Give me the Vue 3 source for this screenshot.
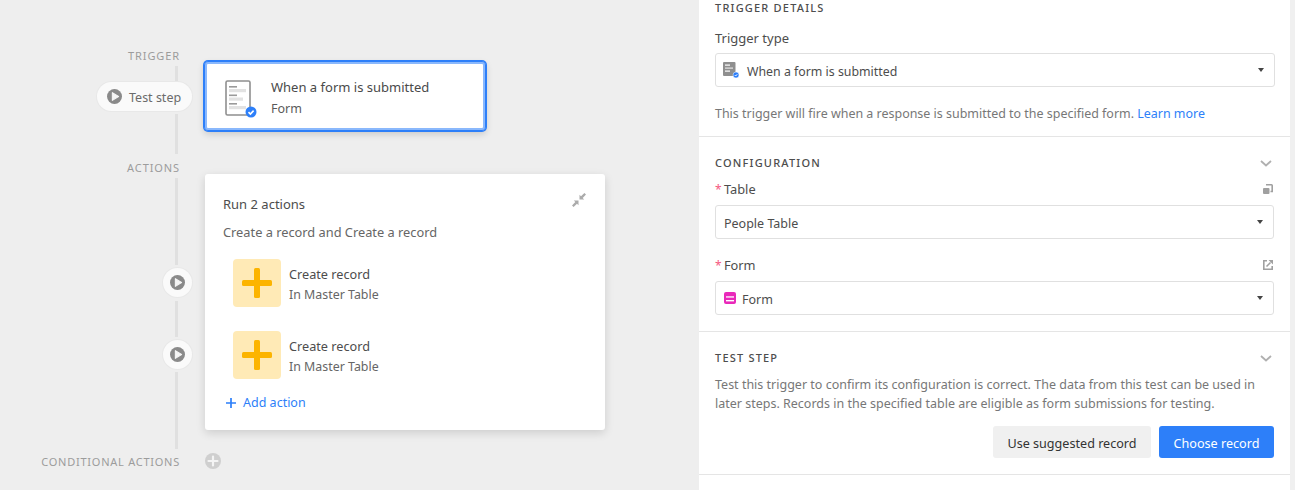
<script setup>
const actions = [{ id: 1 }, { id: 2 }]
</script>

<template>
  <div class="app">
    <section class="canvas">
      <div class="rail">
        <div class="rail-label l-trigger">TRIGGER</div>
        <div class="seg s1"></div>
        <button class="pill">
          <svg class="play" width="15" height="15" viewBox="0 0 14 14"><circle cx="7" cy="7" r="7" fill="#8a8a8a"/><path d="M5 3.400 L10.800 7 L5 10.600 Z" fill="#f5f5f5" stroke="#f5f5f5" stroke-width="1" stroke-linejoin="round"/></svg>
          <span class="pill-text">Test step</span>
        </button>
        <div class="seg s2"></div>
        <div class="rail-label l-actions">ACTIONS</div>
        <div class="seg s3"></div>
        <div class="circle">
          <svg width="15" height="15" viewBox="0 0 14 14"><circle cx="7" cy="7" r="7" fill="#8a8a8a"/><path d="M5 3.400 L10.800 7 L5 10.600 Z" fill="#f5f5f5" stroke="#f5f5f5" stroke-width="1" stroke-linejoin="round"/></svg>
        </div>
        <div class="seg s4"></div>
        <div class="circle">
          <svg width="15" height="15" viewBox="0 0 14 14"><circle cx="7" cy="7" r="7" fill="#8a8a8a"/><path d="M5 3.400 L10.800 7 L5 10.600 Z" fill="#f5f5f5" stroke="#f5f5f5" stroke-width="1" stroke-linejoin="round"/></svg>
        </div>
        <div class="seg s5"></div>
        <div class="rail-label l-cond">CONDITIONAL ACTIONS</div>
      </div>

      <div class="flow">
        <div class="trigger-card">
          <svg class="doc" width="32" height="38" viewBox="0 0 32 38">
            <rect x="1" y="1" width="24" height="34" rx="1.500" fill="#fff" stroke="#8f8f8f" stroke-width="1.600"/>
            <rect x="4" y="6" width="8" height="1.600" fill="#9a9a9a"/>
            <rect x="4" y="9" width="17" height="3.200" fill="#e2e2e2"/>
            <rect x="4" y="14.500" width="8" height="1.600" fill="#9a9a9a"/>
            <rect x="4" y="17.500" width="14" height="3.200" fill="#e2e2e2"/>
            <rect x="4" y="23" width="8" height="1.600" fill="#9a9a9a"/>
            <rect x="4" y="26" width="17" height="3.200" fill="#e2e2e2"/>
            <circle cx="26" cy="32" r="5.500" fill="#2d7ff9"/>
            <path d="M23.500 32.200 L25.400 34 L28.600 30.600" fill="none" stroke="#fff" stroke-width="1.600"/>
          </svg>
          <div class="trigger-text">
            <div class="t-title">When a form is submitted</div>
            <div class="t-sub">Form</div>
          </div>
        </div>

        <div class="action-card">
          <div class="run-head">
            <span class="run-title">Run 2 actions</span>
            <svg class="compress" width="14" height="14" viewBox="0 0 14 14" fill="#ababab">
              <path d="M7.500 6.500 L7.500 1.800 L9 3.300 L12.400 0 L14 1.600 L10.700 5 L12.200 6.500 Z"/>
              <path d="M6.500 7.500 L6.500 12.200 L5 10.700 L1.600 14 L0 12.400 L3.300 9 L1.800 7.500 Z"/>
            </svg>
          </div>
          <div class="run-sub">Create a record and Create a record</div>
          <div class="action-list">
            <div v-for="a in actions" :key="a.id" class="action-item">
              <div class="action-icon">
                <svg width="30" height="30" viewBox="0 0 30 30" fill="#fcb400"><rect x="12" y="0" width="6" height="30" rx="1.500"/><rect x="0" y="12" width="30" height="6" rx="1.500"/></svg>
              </div>
              <div class="action-text">
                <div>Create record</div>
                <div class="muted">In Master Table</div>
              </div>
            </div>
          </div>
          <div class="add-action">
            <svg width="10" height="10" viewBox="0 0 10 10"><path d="M5 0 V10 M0 5 H10" stroke="#2d7ff9" stroke-width="1.700"/></svg>
            <span>Add action</span>
          </div>
        </div>

        <div class="cond-add">
          <svg width="16" height="16" viewBox="0 0 16 16"><circle cx="8" cy="8" r="8" fill="#cfcfcf"/><path d="M8 3.500 V12.500 M3.500 8 H12.500" stroke="#f4f4f4" stroke-width="2.200" stroke-linecap="round"/></svg>
        </div>
      </div>
    </section>

    <section class="panel">
      <div class="block b1">
        <h3 class="caps first">TRIGGER DETAILS</h3>
        <label class="lab lab-type">Trigger type</label>
        <div class="select wide">
          <svg class="sel-icon" width="16" height="16" viewBox="0 0 16 16">
            <rect x="0" y="0" width="12.500" height="14" rx="1" fill="#8f8f8f"/>
            <rect x="2" y="2.500" width="5" height="1.200" fill="#fff"/>
            <rect x="2" y="5.500" width="8" height="1.200" fill="#e6e6e6"/>
            <rect x="2" y="8.500" width="5" height="1.200" fill="#fff"/>
            <circle cx="13" cy="13" r="3" fill="#2d7ff9" stroke="#fff" stroke-width=".5"/>
            <path d="M11.700 13 L12.700 14 L14.300 12.200" fill="none" stroke="#fff" stroke-width=".9"/>
          </svg>
          <span class="val v-long">When a form is submitted</span>
          <i class="caret"></i>
        </div>
        <p class="desc d1">This trigger will fire when a response is submitted to the specified form. <a>Learn more</a></p>
      </div>

      <div class="block b2">
        <div class="head">
          <h3 class="caps">CONFIGURATION</h3>
          <svg class="chev" width="12" height="7" viewBox="0 0 12 7"><path d="M1 1 L6 5.500 L11 1" fill="none" stroke="#b0b0b0" stroke-width="1.800"/></svg>
        </div>
        <div class="field-label f1">
          <span><b class="req">*</b> Table</span>
          <svg width="10" height="10" viewBox="0 0 10 10" fill="none"><path d="M3 .8 H8.500 Q9.200 .8 9.200 1.500 V7.500 H7.500" stroke="#a0a0a0" stroke-width="1.600"/><rect x="0" y="4" width="6.500" height="6" rx="1" fill="#a0a0a0"/></svg>
        </div>
        <div class="select"><span class="val">People Table</span><i class="caret"></i></div>
        <div class="field-label f2">
          <span><b class="req">*</b> Form</span>
          <svg width="10" height="10" viewBox="0 0 10 10" fill="none"><path d="M9.200 6 V9.200 H.8 V.8 H4" stroke="#a0a0a0" stroke-width="1.600"/><path d="M5.500 0 H10 V4.500 Z" fill="#a0a0a0"/><path d="M3.500 6.500 L7.500 2.500" stroke="#a0a0a0" stroke-width="1.600"/></svg>
        </div>
        <div class="select form-sel">
          <svg class="sel-icon2" width="12" height="12" viewBox="0 0 12 12"><rect width="12" height="12" rx="2" fill="#e929ba"/><rect x="2" y="4.300" width="8" height="1.300" fill="#fff"/><rect x="2" y="8" width="8" height="1.400" fill="#fff"/></svg>
          <span class="val">Form</span>
          <i class="caret"></i>
        </div>
      </div>

      <div class="block b3">
        <div class="head">
          <h3 class="caps">TEST STEP</h3>
          <svg class="chev" width="12" height="7" viewBox="0 0 12 7"><path d="M1 1 L6 5.500 L11 1" fill="none" stroke="#b0b0b0" stroke-width="1.800"/></svg>
        </div>
        <p class="desc d2">Test this trigger to confirm its configuration is correct. The data from this test can be used in later steps. Records in the specified table are eligible as form submissions for testing.</p>
        <div class="btns">
          <button class="btn gray">Use suggested record</button>
          <button class="btn blue">Choose record</button>
        </div>
      </div>
    </section>

    <div class="scroll"></div>
  </div>
</template>

<style>
html, body { margin: 0; padding: 0; overflow: hidden; }
</style>

<style scoped>
* { box-sizing: border-box; }
.app {
  display: flex;
  width: 1295px;
  height: 490px;
  overflow: hidden;
  background: #eee;
  font: 12.800px/18px "Noto Sans", sans-serif;
  color: #4d4d4d;
}
.canvas { width: 699px; display: flex; background: #eee; flex: none; }
.rail {
  width: 205px;
  flex: none;
  display: flex;
  flex-direction: column;
  align-items: flex-end;
  padding-top: 48px;
}
.rail-label {
  height: 16px;
  line-height: 16px;
  font-size: 11px;
  letter-spacing: .75px;
  color: #9c9c9c;
  margin-right: 25px;
  white-space: nowrap;
}
.l-trigger, .l-actions { letter-spacing: .9px; }
.l-actions { margin-top: 6px; }
.l-cond { margin-top: 5px; }
.seg { width: 3px; background: #e0e0e0; margin-right: 27px; flex: none; }
.s1 { height: 16px; margin-top: 2px; }
.s2 { height: 40px; margin-top: 3px; }
.s3 { height: 87px; margin-top: 2px; }
.s4 { height: 36px; margin-top: 4px; }
.s5 { height: 77px; margin-top: 3px; }
.pill {
  all: unset;
  box-sizing: border-box;
  height: 29px;
  width: 95px;
  margin-right: 13px;
  border-radius: 15px;
  background: #fafafa;
  box-shadow: 0 0 0 1px #e8e8e8;
  display: flex;
  align-items: center;
  gap: 7px;
  padding-left: 10px;
  font: 12.500px/18px "Noto Sans", sans-serif;
  color: #6b6b6b;
}
.pill-text { padding-top: 2px; }
.play { flex: none; }
.circle {
  width: 29px;
  height: 29px;
  margin-right: 13px;
  margin-top: 3px;
  border-radius: 50%;
  background: #fafafa;
  box-shadow: 0 0 0 1px #e8e8e8;
  display: flex;
  align-items: center;
  justify-content: center;
  flex: none;
}
.flow { flex: 1; display: flex; flex-direction: column; padding-top: 61px; }
.trigger-card {
  width: 282px;
  height: 70px;
  margin-left: -1px;
  background: #fff;
  border: 1px solid #2d7ff9;
  border-radius: 4px;
  box-shadow: inset 0 0 0 2px #8ab8fc, 0 0 0 1px #2d7ff9, 0 3px 7px rgba(0,0,0,.16);
  display: flex;
  align-items: center;
  padding-left: 20px;
}
.doc { flex: none; margin-top: 6px; }
.trigger-text { margin-left: 14px; margin-top: 3px; }
.t-title { font-size: 13px; line-height: 21px; color: #4a4a4a; }
.t-sub { color: #5a5a5a; line-height: 21px; font-size: 12.500px; }
.action-card {
  width: 400px;
  height: 256px;
  margin-top: 43px;
  background: #fff;
  border-radius: 3px;
  box-shadow: 0 3px 10px rgba(0,0,0,.14);
  padding: 21px 18px 0;
  display: flex;
  flex-direction: column;
}
.run-head { display: flex; justify-content: space-between; height: 18px; align-items: center; font-size: 13px; }
.compress { margin-top: -8px; margin-right: 1px; }
.run-sub { margin-top: 10px; color: #666; }
.action-list { display: flex; flex-direction: column; gap: 24px; margin-top: 18px; margin-left: 10px; }
.action-item { display: flex; align-items: center; gap: 8px; }
.action-icon {
  width: 48px;
  height: 48px;
  border-radius: 4px;
  background: #ffeab6;
  display: flex;
  align-items: center;
  justify-content: center;
  flex: none;
}
.action-text { line-height: 20px; margin-top: 3px; font-size: 12.700px; }
.muted { color: #666; font-size: 12.400px; margin-top: 1px; }
.add-action { display: flex; align-items: center; gap: 7px; color: #2d7ff9; margin-top: 15px; margin-left: 3px; font-size: 12.500px; }
.cond-add { margin-top: 23px; height: 16px; }
.panel {
  width: 591px;
  flex: none;
  background: #fff;
  display: flex;
  flex-direction: column;
}
.block { padding: 0 16px; border-bottom: 1px solid #e5e5e5; }
.b1 { height: 137px; }
.b2 { height: 195px; }
.b3 { height: 143px; }
.caps {
  margin: 0;
  font: 500 11px/16px "Noto Sans", sans-serif;
  letter-spacing: 1.200px;
  color: #4d4d4d;
}
.lab { display: block; margin-top: 13px; line-height: 18px; font-size: 13px; }
.select {
  height: 34px;
  border: 1px solid #e0e0e0;
  border-radius: 3px;
  display: flex;
  align-items: center;
  padding: 0 8px;
  width: 559px;
}
.select.wide { width: 560px; margin-top: 6px; }
.val { padding-top: 4px; font-size: 12.500px; }
.v-long { font-size: 12.350px; }
.sel-icon { margin-right: 8px; margin-left: -1px; flex: none; }
.sel-icon2 { margin-right: 6px; flex: none; }
.caret {
  margin-left: auto;
  margin-right: 2px;
  width: 0;
  height: 0;
  border-left: 3.500px solid transparent;
  border-right: 3.500px solid transparent;
  border-top: 4px solid #444;
}
.desc { margin: 0; color: #777; font-size: 12.500px; }
.desc a { color: #2d7ff9; }
.d1 { margin-top: 18px; font-size: 12.460px; }
.head { display: flex; justify-content: space-between; align-items: center; height: 16px; }
.b2 .head { margin-top: 18px; }
.b3 .head { margin-top: 18px; }
.chev { margin-right: 2px; }
.field-label { display: flex; justify-content: space-between; align-items: center; height: 18px; padding-right: 1px; }
.f1 { margin-top: 9px; margin-bottom: 7px; }
.f2 { margin-top: 17px; margin-bottom: 7px; }
.req { color: #f5587f; font-weight: 400; margin-right: -1px; font-size: 12px; }
.d2 { margin-top: 9px; line-height: 19px; }
.btns { display: flex; justify-content: flex-end; gap: 8px; margin-top: 13px; }
.btn {
  all: unset;
  box-sizing: border-box;
  height: 32px;
  border-radius: 3px;
  font: 12.600px/36px "Noto Sans", sans-serif;
  text-align: center;
}
.gray { width: 158px; background: #f0f0f0; color: #333; }
.blue { width: 115px; background: #2d7ff9; color: #fff; }
.scroll { width: 5px; background: #f0f0f0; flex: none; }
</style>
